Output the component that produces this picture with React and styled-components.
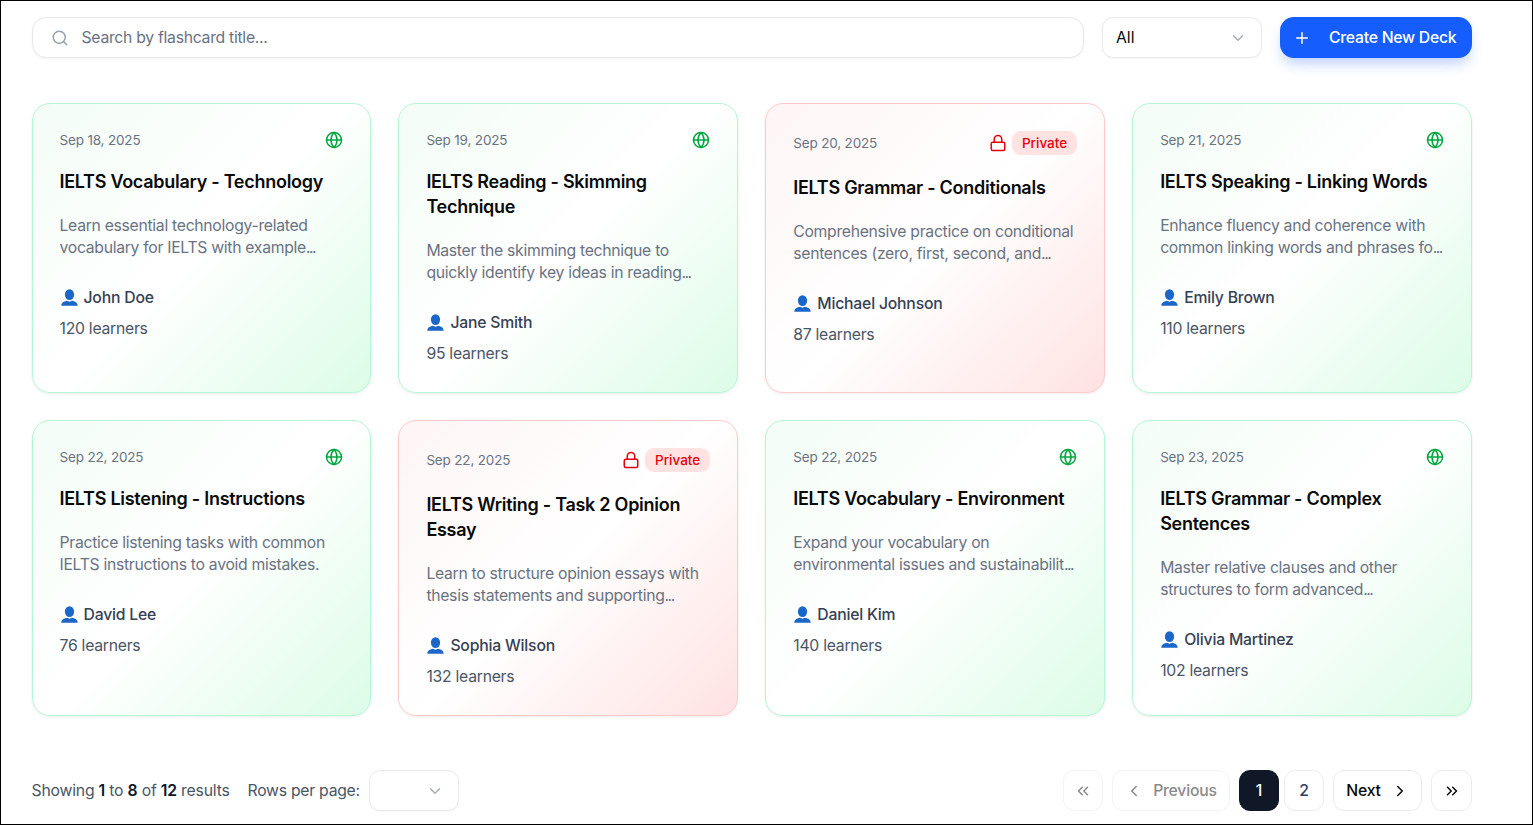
import React from "react";
import styled, { createGlobalStyle } from "styled-components";
import {
  ChevronDown,
  ChevronLeft,
  ChevronRight,
  ChevronsLeft,
  ChevronsRight,
  Globe,
  Lock,
  Plus,
  Search,
} from "lucide-react";

const GlobalStyle = createGlobalStyle`
  * { box-sizing: border-box; }
  html, body { margin: 0; padding: 0; background: #fff; }
  body { font-family: Inter, "Liberation Sans", sans-serif; color: #0a0a0a; overflow: hidden; }
`;

const Page = styled.div`
  width: 1533px;
  height: 825px;
  border: 1px solid #000;
  padding: 16px 60px 0 30.5px;
  background: #fff;
  overflow: hidden;
`;

const Toolbar = styled.div`
  display: flex;
  align-items: center;
  gap: 18px;
  margin-bottom: 45px;
`;

const SearchBox = styled.div`
  flex: 1;
  height: 41px;
  display: flex;
  align-items: center;
  gap: 13px;
  padding: 0 18px;
  background: #fff;
  border: 1px solid #e5e7eb;
  border-radius: 14px;
  font-size: 15.75px;
  letter-spacing: -0.28px;
  color: #6a7282;
  box-shadow: 0 1px 2px rgba(0, 0, 0, 0.04);

  svg { color: #99a1af; }
`;

const SelectBox = styled.div`
  width: ${(props) => props.$width}px;
  height: 41px;
  display: flex;
  align-items: center;
  justify-content: space-between;
  padding: 0 14px 0 13px;
  background: #fff;
  border: 1px solid #e9eaee;
  border-radius: 11px;
  font-size: 15.75px;
  box-shadow: 0 1px 2px rgba(0, 0, 0, 0.03);

  svg { color: #a8aeb8; }
`;

const CreateButton = styled.button`
  width: 192px;
  height: 41px;
  display: flex;
  align-items: center;
  gap: 18px;
  padding: 0 13px;
  border: 0;
  border-radius: 14px;
  background: #155dfc;
  color: #fff;
  font: 500 15.75px Inter, sans-serif;
  letter-spacing: -0.24px;
  white-space: nowrap;
  box-shadow: 0 8px 14px -3px rgba(21, 93, 252, 0.3);
`;

const CardGrid = styled.div`
  display: grid;
  grid-template-columns: repeat(4, 1fr);
  gap: 27px;
`;

const Card = styled.div`
  display: flex;
  flex-direction: column;
  padding: 27px 27px 26px;
  border-radius: 18px;
  border: 1px solid ${(props) => (props.$private ? "#ffc9c9" : "#b4f7d4")};
  background: linear-gradient(
    135deg,
    ${(props) => (props.$private ? "#fef5f5" : "#f3fdf6")} 0%,
    #ffffff 50%,
    ${(props) => (props.$private ? "#ffe2e2" : "#dcfce7")} 100%
  );
  box-shadow: 0 1px 3px rgba(0, 0, 0, 0.08);
`;

const CardHead = styled.div`
  display: flex;
  align-items: center;
  justify-content: space-between;
  margin-bottom: 20px;
`;

const DateText = styled.span`
  font-size: 13.5px;
  line-height: 18px;
  letter-spacing: -0.17px;
  color: #6a7282;
`;

const Visibility = styled.div`
  display: flex;
  align-items: center;
  gap: 5px;
  color: #e7000b;
`;

const GlobeIcon = styled(Globe)`
  color: #00a63e;
  display: block;
`;

const Badge = styled.span`
  height: 24px;
  padding: 0 10px;
  display: flex;
  align-items: center;
  border-radius: 9px;
  background: #ffe2e2;
  color: #e7000b;
  font-size: 13.5px;
  font-weight: 500;
`;

const Title = styled.h3`
  margin: 0 0 20.5px;
  font-size: 18px;
  line-height: 25px;
  font-weight: 600;
  letter-spacing: -0.27px;
  color: #0a0a0a;
`;

const Description = styled.p`
  margin: 0 0 25.5px;
  font-size: 15.75px;
  line-height: 22.5px;
  letter-spacing: -0.3px;
  color: #6a7282;
`;

const DescriptionLine = styled.span`
  display: block;
  white-space: nowrap;
`;

const Dots = styled.span`
  letter-spacing: -1.5px;
`;

const Author = styled.div`
  display: flex;
  align-items: center;
  gap: 5px;
  height: 24px;
  margin-bottom: 8px;
  font-size: 15.75px;
  font-weight: 500;
  letter-spacing: -0.2px;
  color: #364153;
`;

const Learners = styled.div`
  font-size: 15.75px;
  line-height: 24px;
  letter-spacing: -0.26px;
  color: #4a5565;
`;

const Footer = styled.div`
  display: flex;
  align-items: center;
  justify-content: space-between;
  margin-top: 54px;
`;

const FooterLeft = styled.div`
  display: flex;
  align-items: center;
  gap: 18px;
  font-size: 15.75px;
  letter-spacing: -0.2px;
  color: #4a5565;

  b { font-weight: 600; color: #101828; }
`;

const RowsLabel = styled.div`
  display: flex;
  align-items: center;
  gap: 9px;
  letter-spacing: -0.26px;
`;

const Pager = styled.div`
  display: flex;
  align-items: center;
  gap: 9px;
`;

const PageNumbers = styled.div`
  display: flex;
  align-items: center;
  gap: 5px;
`;

const PageButton = styled.div`
  height: 41px;
  width: ${(props) => props.$width || 40}px;
  display: flex;
  align-items: center;
  justify-content: center;
  gap: 10px;
  border-radius: 11px;
  border: 1px solid ${(props) => (props.$active ? "#101828" : props.$disabled ? "#f3f4f6" : "#ebecef")};
  background: ${(props) => (props.$active ? "#101828" : "#fff")};
  color: ${(props) => (props.$active ? "#fff" : props.$disabled ? "#8a8a8a" : props.$number ? "#314158" : "#0a0a0a")};
  font-size: 15.75px;
  font-weight: 500;
  letter-spacing: -0.2px;
`;

const cards = [
  { date: "Sep 18, 2025", title: "IELTS Vocabulary - Technology", lines: ["Learn essential technology-related", "vocabulary for IELTS with example"], cut: true, author: "John Doe", learners: 120 },
  { date: "Sep 19, 2025", title: "IELTS Reading - Skimming Technique", lines: ["Master the skimming technique to", "quickly identify key ideas in reading"], cut: true, author: "Jane Smith", learners: 95 },
  { date: "Sep 20, 2025", title: "IELTS Grammar - Conditionals", lines: ["Comprehensive practice on conditional", "sentences (zero, first, second, and"], cut: true, author: "Michael Johnson", learners: 87, isPrivate: true },
  { date: "Sep 21, 2025", title: "IELTS Speaking - Linking Words", lines: ["Enhance fluency and coherence with", "common linking words and phrases fo"], cut: true, author: "Emily Brown", learners: 110 },
  { date: "Sep 22, 2025", title: "IELTS Listening - Instructions", lines: ["Practice listening tasks with common", "IELTS instructions to avoid mistakes."], author: "David Lee", learners: 76 },
  { date: "Sep 22, 2025", title: "IELTS Writing - Task 2 Opinion Essay", lines: ["Learn to structure opinion essays with", "thesis statements and supporting"], cut: true, author: "Sophia Wilson", learners: 132, isPrivate: true },
  { date: "Sep 22, 2025", title: "IELTS Vocabulary - Environment", lines: ["Expand your vocabulary on", "environmental issues and sustainabilit"], cut: true, author: "Daniel Kim", learners: 140 },
  { date: "Sep 23, 2025", title: "IELTS Grammar - Complex Sentences", lines: ["Master relative clauses and other", "structures to form advanced"], cut: true, author: "Olivia Martinez", learners: 102 },
];

const PersonIcon = () => (
  <svg width="19" height="19" viewBox="0 0 19 19" aria-hidden="true">
    <ellipse cx="9.5" cy="6.6" rx="4.6" ry="5.4" fill="#1b66c9" />
    <path d="M1.3 17.8c0-3.2 2.6-4.2 5.6-5l2.6 1 2.6-1c3 .8 5.6 1.8 5.6 5z" fill="#1b66c9" />
  </svg>
);

const DeckCard = ({ card }) => (
  <Card $private={card.isPrivate}>
    <CardHead>
      <DateText>{card.date}</DateText>
      {card.isPrivate ? (
        <Visibility>
          <Lock size={18} />
          <Badge>Private</Badge>
        </Visibility>
      ) : (
        <GlobeIcon size={18} />
      )}
    </CardHead>
    <Title>{card.title}</Title>
    <Description>
      <DescriptionLine>{card.lines[0]}</DescriptionLine>
      <DescriptionLine>
        {card.lines[1]}
        {card.cut && <Dots>...</Dots>}
      </DescriptionLine>
    </Description>
    <Author>
      <PersonIcon />
      {card.author}
    </Author>
    <Learners>{card.learners} learners</Learners>
  </Card>
);

const App = () => (
  <Page>
    <GlobalStyle />
    <Toolbar>
      <SearchBox>
        <Search size={18} />
        Search by flashcard title...
      </SearchBox>
      <SelectBox $width={160}>
        All
        <ChevronDown size={18} />
      </SelectBox>
      <CreateButton>
        <Plus size={18} />
        Create New Deck
      </CreateButton>
    </Toolbar>
    <CardGrid>
      {cards.map((card) => (
        <DeckCard key={card.title} card={card} />
      ))}
    </CardGrid>
    <Footer>
      <FooterLeft>
        <span>
          Showing <b>1</b> to <b>8</b> of <b>12</b> results
        </span>
        <RowsLabel>
          Rows per page:
          <SelectBox $width={90}>
            <span />
            <ChevronDown size={18} />
          </SelectBox>
        </RowsLabel>
      </FooterLeft>
      <Pager>
        <PageButton $disabled>
          <ChevronsLeft size={18} />
        </PageButton>
        <PageButton $disabled $width={118}>
          <ChevronLeft size={18} />
          Previous
        </PageButton>
        <PageNumbers>
          <PageButton $active>1</PageButton>
          <PageButton $number>2</PageButton>
        </PageNumbers>
        <PageButton $width={89}>
          Next
          <ChevronRight size={18} />
        </PageButton>
        <PageButton $width={41}>
          <ChevronsRight size={18} />
        </PageButton>
      </Pager>
    </Footer>
  </Page>
);

export default App;
